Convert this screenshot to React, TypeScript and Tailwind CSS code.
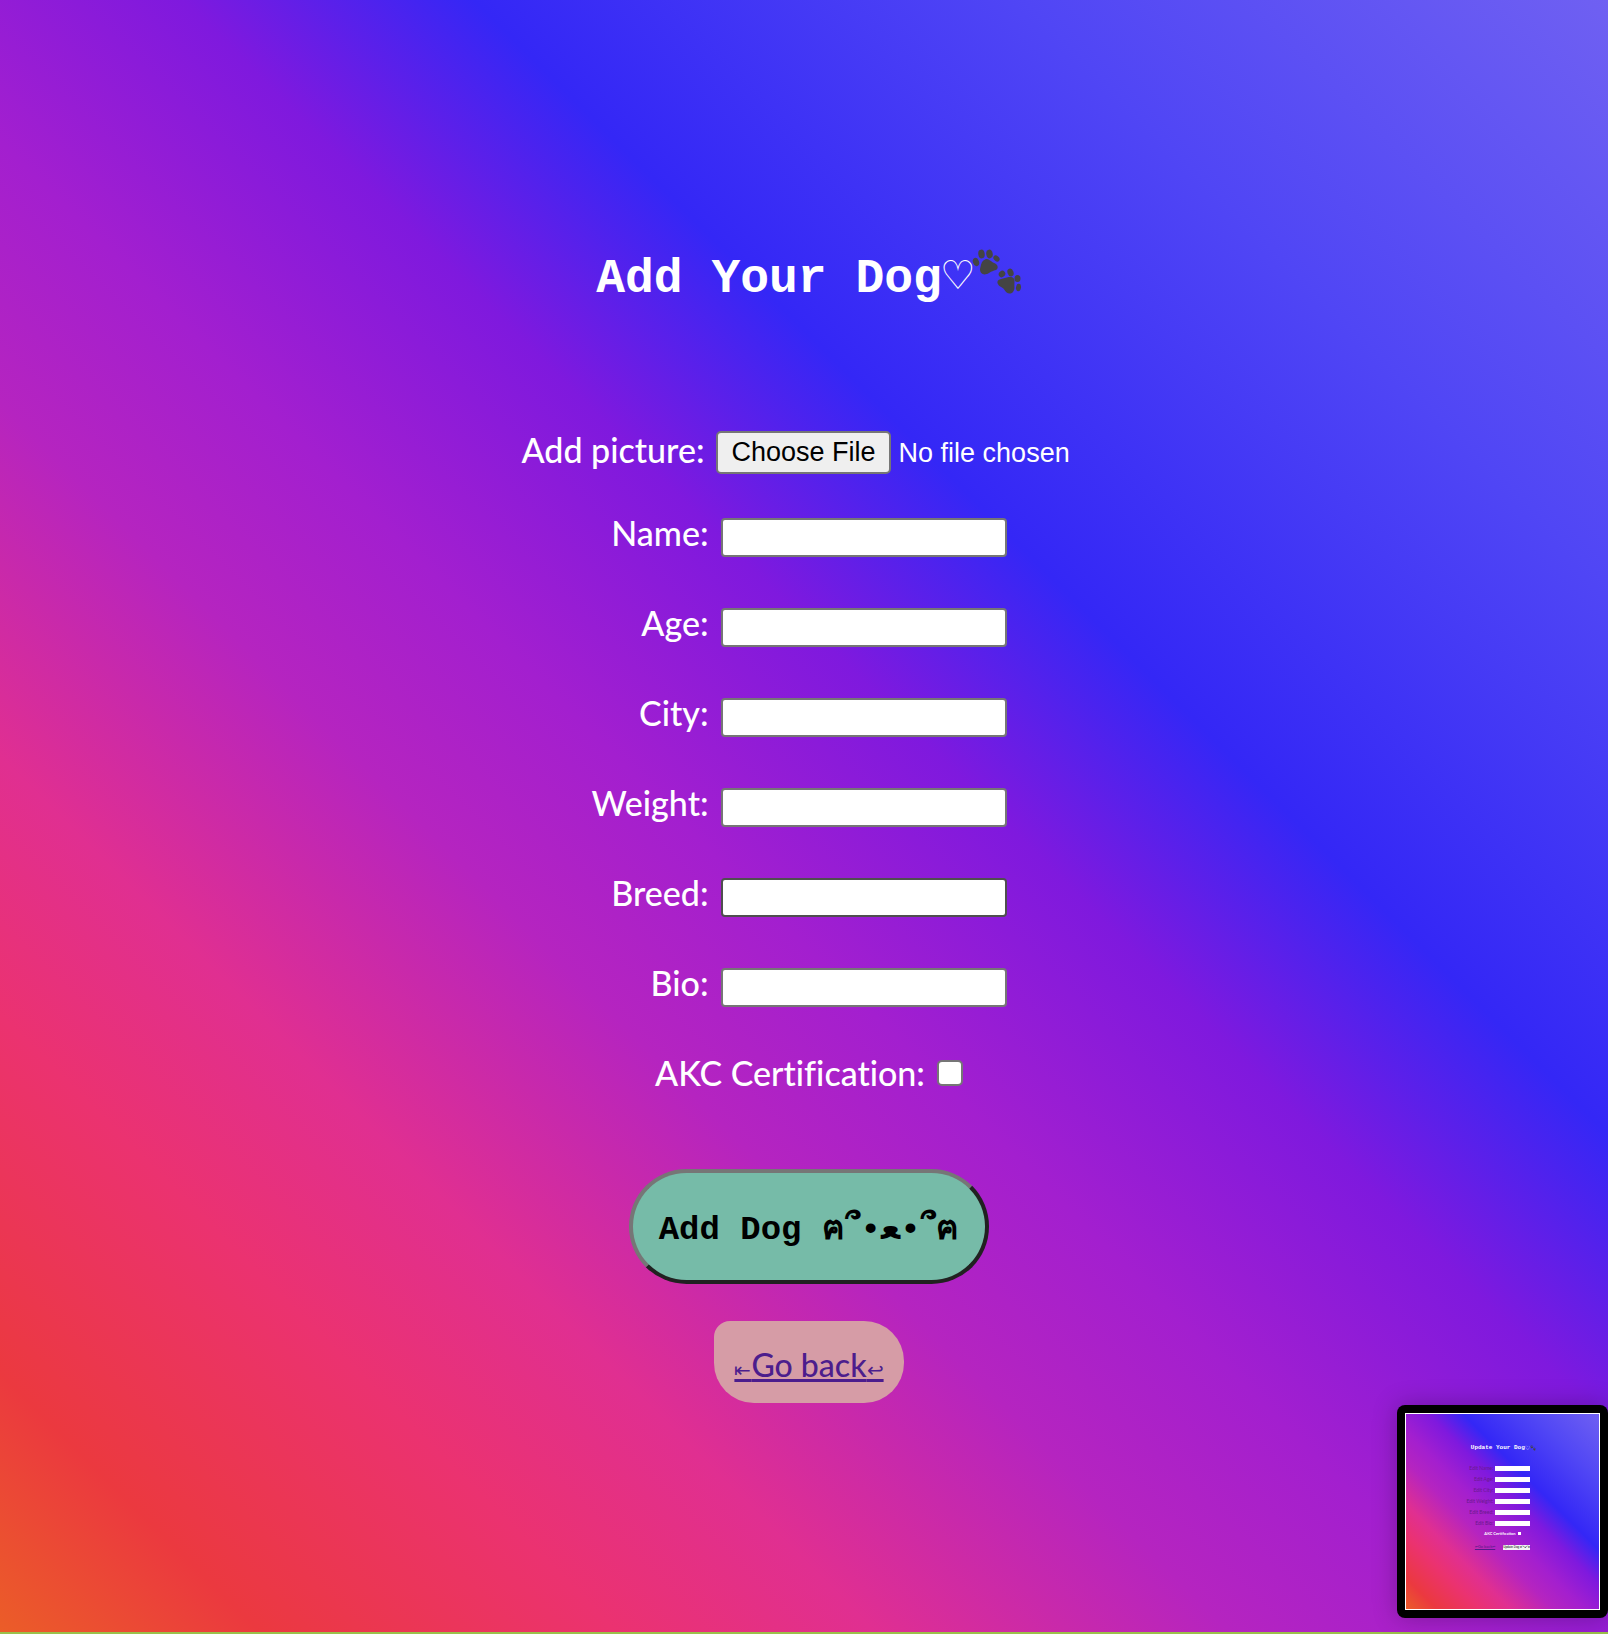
const fields = [
  { id: "name", label: "Name:", border: "border-[#767676]" },
  { id: "age", label: "Age:", border: "border-[#767676]" },
  { id: "city", label: "City:", border: "border-[#767676]" },
  { id: "weight", label: "Weight:", border: "border-[#767676]" },
  { id: "breed", label: "Breed:", border: "border-[#4f4f4f]" },
  { id: "bio", label: "Bio:", border: "border-[#767676]" },
];

const editFields = ["Edit Name:", "Edit Age:", "Edit City:", "Edit Weight:", "Edit Breed:", "Edit Bio:"];

const rainbow =
  "bg-[linear-gradient(45deg,#eb5d28_0%,#eb393f_8%,#eb3270_19%,#e02f91_27%,#b524c0_38%,#a31fcf_46%,#7f19de_56%,#3427f6_65%,#5046f5_82%,#6f60f2_100%)]";

function Paws({ className }: { className: string }) {
  return (
    <svg viewBox="0 0 50 46" className={className} fill="#444" aria-hidden="true">
      <ellipse cx="4" cy="13" rx="3" ry="4.2" transform="rotate(-20 4 13)" />
      <ellipse cx="9.500" cy="5" rx="3.2" ry="4.4" transform="rotate(-8 9.5 5)" />
      <ellipse cx="17.500" cy="5" rx="3.200" ry="4.4" transform="rotate(-12 17.5 5)" />
      <ellipse cx="24.500" cy="9.500" rx="2.5" ry="3.5" transform="rotate(-50 24.5 9.5)" />
      <path d="M13 10.500C16 9 18 12 21 13.500C26 15 27 19 24 21C21 22 20 22 17 24C12 27 8 25 8 20C9 17 9 12 13 10.500Z" />
      <ellipse cx="30" cy="25" rx="3.4" ry="3.1" transform="rotate(-40 30 25)" />
      <ellipse cx="38.500" cy="23.500" rx="4" ry="3" transform="rotate(70 38.5 23.5)" />
      <ellipse cx="45.500" cy="29.500" rx="3" ry="3.6" />
      <ellipse cx="46.500" cy="38.500" rx="2.500" ry="3.700" transform="rotate(8 46.5 38.5)" />
      <path d="M26.500 31C30 29.500 32 29 35 28.500C40 27 43 29 42.500 33C42 37 43.500 40 41 43C38 46 34 44 32.500 41C31 38 28 38 26.500 36C25 34 25 32 26.500 31Z" />
    </svg>
  );
}

function Preview() {
  return (
    <aside className="absolute right-0 bottom-3.5 rounded-lg bg-black p-2 shadow-[0_0_24px_rgba(0,0,0,0.25)]">
      <div className={"flex h-[197px] w-[195px] flex-col items-center border border-white pt-[30px] text-white " + rainbow}>
        <h2 className="flex items-center pl-0.5 font-['Liberation_Mono'] text-[6px] leading-2 font-bold">
          Update Your Dog<span className="font-['DejaVu_Sans'] font-normal">♡</span>
          <Paws className="size-1.5" />
        </h2>
        <div className="mt-3.5 mr-2 grid grid-cols-[auto_35px] items-center gap-x-0.5 gap-y-[6px]">
          {editFields.map((f) => (
            <label key={f} className="contents font-[Lato] text-[5px] leading-[5px] text-[#6a1a8b]">
              <span className="text-right">{f}</span>
              <input className="h-[5px] w-[35px] bg-white" />
            </label>
          ))}
        </div>
        <label className="mt-[5px] flex items-center gap-0.5 font-[Lato] text-[4px] leading-[5px] font-bold">
          AKC Certification <input type="checkbox" className="size-[3px] appearance-none bg-white" />
        </label>
        <div className="mt-2 flex items-center gap-2">
          <a href="#back" className="font-[Lato] text-[4px] leading-1.5 text-[#551a8b] underline">⇤Go back↩</a>
          <button type="button" className="bg-gray-100 font-['Liberation_Sans','DejaVu_Sans'] text-[3px] leading-[5px] text-black">
            Update Dog ฅ՞•ﻌ•՞ฅ
          </button>
        </div>
      </div>
    </aside>
  );
}

export default function App() {
  return (
    <div className={"relative flex min-h-screen flex-col items-center border-b-2 border-[#9bc04a] pl-2.5 text-white " + rainbow}>
      <h1 className="mt-[251px] flex h-14 items-center font-['Liberation_Mono'] text-5xl font-bold">
        Add Your Dog<span className="-ml-0.5 mb-2 w-8 font-['DejaVu_Sans'] text-[40px] font-normal">♡</span>
        <Paws className="mb-3.5 h-[46px] w-[50px]" />
      </h1>
      <form className="mt-[123px] flex flex-col items-center font-[Lato] text-[34px] leading-[48px] font-medium [font-variant-ligatures:none]">
        <div className="flex items-center gap-3 pr-4">
          <label htmlFor="picture" className="-mt-1">Add picture:</label>
          <input
            id="picture"
            type="file"
            className="w-[364px] font-['Liberation_Sans'] text-[27px] leading-[38px] font-normal file:mr-2 file:h-[43px] file:rounded-[5px] file:border-2 file:border-solid file:border-[#767676] file:bg-[#efefef] file:px-[13px] file:text-black"
          />
        </div>
        <div className="mt-[39px] grid grid-cols-[1fr_286px] items-center gap-x-3 gap-y-[42px] pr-5">
          {fields.map((f) => (
            <div key={f.id} className="contents">
              <label htmlFor={f.id} className="-mt-1 mb-1 text-right">{f.label}</label>
              <input
                id={f.id}
                type="text"
                className={"h-[39px] w-full rounded-[4px] border-2 bg-white px-1 text-2xl text-black " + f.border}
              />
            </div>
          ))}
        </div>
        <div className="mt-[38px] flex items-center gap-3">
          <label htmlFor="akc">AKC Certification:</label>
          <input id="akc" type="checkbox" className="size-[26px] appearance-none rounded-[5px] border-2 border-[#767676] bg-white" />
        </div>
        <button
          type="submit"
          className="mt-[72px] h-[115px] rounded-[60px] border-4 border-t-[#767676] border-r-[#212121] border-b-[#212121] border-l-[#767676] bg-[#76bba8] px-[26px] pt-1.5 font-['Liberation_Mono','DejaVu_Sans'] text-[34px] font-bold text-black"
        >
          Add Dog ฅ՞•ﻌ•՞ฅ
        </button>
      </form>
      <a
        href="#back"
        className="mt-[37px] flex h-[82px] items-center rounded-[40px] rounded-tl-2xl bg-[#d69ca6] px-5 pt-1.5 font-[Lato] text-[32px] leading-10 font-medium text-[#4c1d8d]"
      >
        <span className="underline decoration-3">
          <span className="text-xl">⇤</span>Go back<span className="text-xl">↩</span>
        </span>
      </a>
      <Preview />
    </div>
  );
}
